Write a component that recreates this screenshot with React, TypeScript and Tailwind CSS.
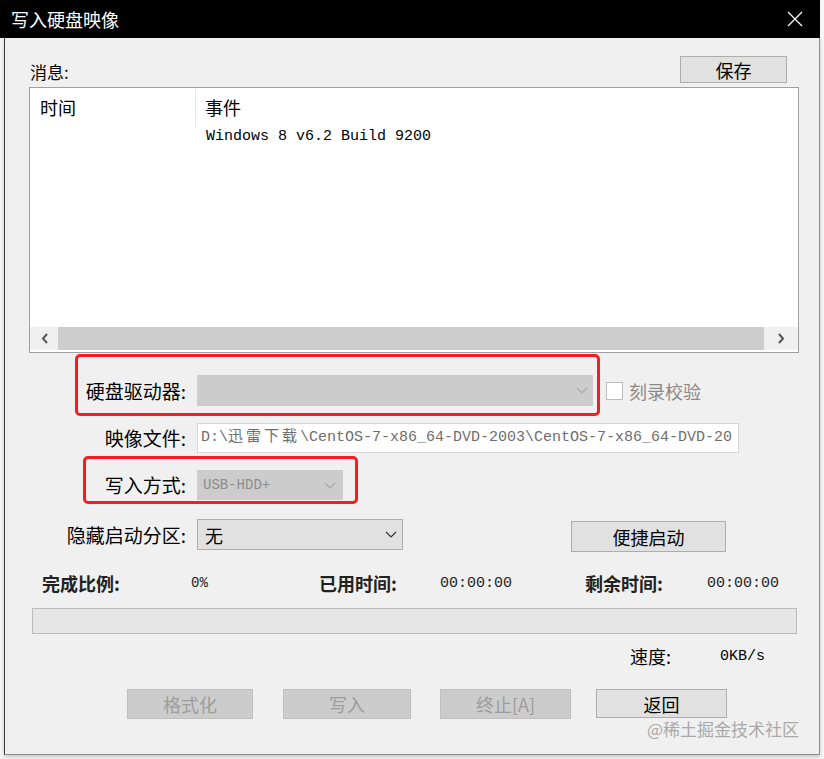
import React from 'react'

const ui = { fontFamily: "'Noto Sans CJK SC', 'Microsoft YaHei', sans-serif" }
const mono = { fontFamily: "'Liberation Mono', 'Noto Sans CJK SC', monospace" }

function Chevron({ color }: { color: string }) {
  return (
    <svg width="12" height="7" viewBox="0 0 12 7" fill="none" stroke={color} strokeWidth="1.2">
      <polyline points="1,1 6,6 11,1" />
    </svg>
  )
}

function Arrow({ dir }: { dir: 'left' | 'right' }) {
  return (
    <svg width="7" height="11" viewBox="0 0 7 11" fill="none" stroke="#555" strokeWidth="2">
      <polyline points={dir === 'left' ? '6,1 2,5.5 6,10' : '1,1 5,5.5 1,10'} />
    </svg>
  )
}

function Label({ text, width = 183 }: { text: string; width?: number }) {
  return (
    <span className="text-right text-[19px] leading-[24px] text-black pr-[2px]" style={{ width }}>
      {text}
    </span>
  )
}

function Button({ label, disabled, className }: { label: string; disabled?: boolean; className: string }) {
  return (
    <div
      className={`flex items-center justify-center border text-[18px] leading-none ${
        disabled ? 'bg-[#cccccc] border-[#bfbfbf] text-[#9c9c9c]' : 'bg-[#e1e1e1] border-[#adadad] text-black'
      } ${className}`}
    >
      {label}
    </div>
  )
}

export default function App() {
  return (
    <div className="w-[824px] h-[759px] bg-[#f7f7f7] overflow-hidden" style={ui}>
      {/* Title bar */}
      <div className="w-[820px] h-[38px] bg-black flex items-center justify-between pl-[11px] pr-[17px]">
        <span className="text-white text-[18px] leading-none">写入硬盘映像</span>
        <svg width="16" height="16" viewBox="0 0 16 16" stroke="#fff" strokeWidth="1.2">
          <line x1="1" y1="1" x2="15" y2="15" />
          <line x1="15" y1="1" x2="1" y2="15" />
        </svg>
      </div>

      {/* Dialog body */}
      <div className="relative flex flex-col ml-[4px] w-[816px] h-[717px] bg-[#f0f0f0] border-l border-l-[#3a3a3a] border-r border-r-[#8c8c8c] border-b border-b-[#8c8c8c] shadow-[0_2px_4px_rgba(0,0,0,0.2)]">
        {/* Messages header */}
        <div className="flex items-end h-[27px] mt-[18px]">
          <span className="ml-[25px] mb-[1px] text-[17px] leading-[20px] text-black">消息:</span>
          <Button label="保存" className="ml-auto mr-[32px] w-[107px] h-[27px]" />
        </div>

        {/* Message list */}
        <div className="mt-[4px] ml-[24px] w-[770px] h-[266px] bg-white border border-[#a0a0a0] flex flex-col">
          <div className="flex h-[39px]">
            <div className="w-[166px] h-[38px] mt-[1px] border-r border-[#e6e6e6] pl-[10px] pt-[7px] text-[18px] leading-[22px] text-black">
              时间
            </div>
            <div className="pl-[9px] pt-[8px] text-[18px] leading-[22px] text-black">事件</div>
          </div>
          <div className="pl-[176px] text-[15px] leading-[20px] text-black" style={mono}>
            Windows 8 v6.2 Build 9200
          </div>
          <div className="mt-auto mb-[2px] h-[23px] flex">
            <div className="w-[28px] flex items-center justify-center bg-[#f0f0f0]">
              <Arrow dir="left" />
            </div>
            <div className="flex-1 bg-[#cdcdcd]" />
            <div className="w-[34px] flex items-center justify-center bg-[#f0f0f0]">
              <Arrow dir="right" />
            </div>
          </div>
        </div>

        {/* Drive */}
        <div className="flex items-center mt-[22px] h-[31px]">
          <Label text="硬盘驱动器:" />
          <div className="ml-[9px] w-[396px] h-[31px] bg-[#cccccc] flex items-center justify-end pr-[5px]">
            <Chevron color="#aaaaaa" />
          </div>
          <div className="ml-[13px] w-[17px] h-[18px] bg-white border border-[#bcbcbc]" />
          <span className="ml-[6px] text-[18px] leading-[24px] text-[#8a8a8a]">刻录校验</span>
        </div>

        {/* Image file */}
        <div className="flex items-center mt-[17px] h-[30px]">
          <Label text="映像文件:" />
          <div
            className="ml-[9px] w-[542px] h-[30px] bg-white border border-[#d6d6d6] pl-[3px] overflow-hidden whitespace-nowrap text-[15px] leading-[28px] text-[#6e6e6e]"
            style={mono}
          >
            D:\<span className="tracking-[3px]">迅雷下载</span>\CentOS-7-x86_64-DVD-2003\CentOS-7-x86_64-DVD-20
          </div>
        </div>

        {/* Write mode */}
        <div className="flex items-center mt-[17px] h-[30px]">
          <Label text="写入方式:" />
          <div className="ml-[9px] w-[146px] h-[30px] bg-[#cccccc] flex items-center justify-between pl-[6px] pr-[7px]">
            <span className="text-[14px] leading-none text-[#8c8c8c]" style={mono}>USB-HDD+</span>
            <Chevron color="#a8a8a8" />
          </div>
        </div>

        {/* Hidden boot partition + quick boot */}
        <div className="flex items-start mt-[19px] h-[33px]">
          <div className="flex items-center h-[31px]">
            <Label text="隐藏启动分区:" />
          </div>
          <div className="ml-[9px] w-[206px] h-[31px] bg-[#e1e1e1] border border-[#adadad] flex items-center justify-between pl-[7px] pr-[5px]">
            <span className="text-[18px] leading-none text-black">无</span>
            <Chevron color="#333333" />
          </div>
          <Button label="便捷启动" className="ml-[168px] mt-[2px] w-[155px] h-[31px]" />
        </div>

        {/* Progress stats */}
        <div className="flex items-center mt-[19px] h-[24px] pl-[37px] text-black">
          <span className="w-[149px] text-[18px] font-bold leading-none text-[#222]">完成比例:</span>
          <span className="w-[128px] text-[14px] leading-none text-[#222]" style={mono}>0%</span>
          <span className="w-[121px] text-[18px] font-bold leading-none text-[#222]">已用时间:</span>
          <span className="w-[145px] text-[15px] leading-none text-[#222]" style={mono}>00:00:00</span>
          <span className="w-[122px] text-[18px] font-bold leading-none text-[#222]">剩余时间:</span>
          <span className="text-[15px] leading-none text-[#222]" style={mono}>00:00:00</span>
        </div>

        <div className="mt-[13px] ml-[27px] w-[765px] h-[26px] bg-[#e6e6e6] border border-[#bcbcbc]" />

        {/* Speed */}
        <div className="flex items-center mt-[11px] h-[22px] pl-[625px]">
          <span className="w-[90px] text-[18px] leading-none text-black">速度:</span>
          <span className="text-[15px] leading-none text-black" style={mono}>0KB/s</span>
        </div>

        {/* Actions */}
        <div className="flex mt-[22px] h-[30px] pl-[122px]">
          <Button label="格式化" disabled className="w-[126px] h-[30px]" />
          <Button label="写入" disabled className="ml-[30px] w-[128px] h-[30px]" />
          <Button label="终止[A]" disabled className="ml-[29px] w-[131px] h-[30px]" />
          <Button label="返回" className="ml-[25px] w-[131px] h-[29px]" />
        </div>

        {/* Highlight frames */}
        <div className="absolute left-[70px] top-[316px] w-[525px] h-[62px] border-[3px] border-[#f51d1d] rounded-[5px] pointer-events-none" />
        <div className="absolute left-[78px] top-[418px] w-[275px] h-[48px] border-[3px] border-[#f51d1d] rounded-[5px] pointer-events-none" />

        <span className="absolute left-[642px] top-[679px] text-[17px] leading-[24px] text-[#a9a9a9]">
          @稀土掘金技术社区
        </span>
      </div>
    </div>
  )
}
